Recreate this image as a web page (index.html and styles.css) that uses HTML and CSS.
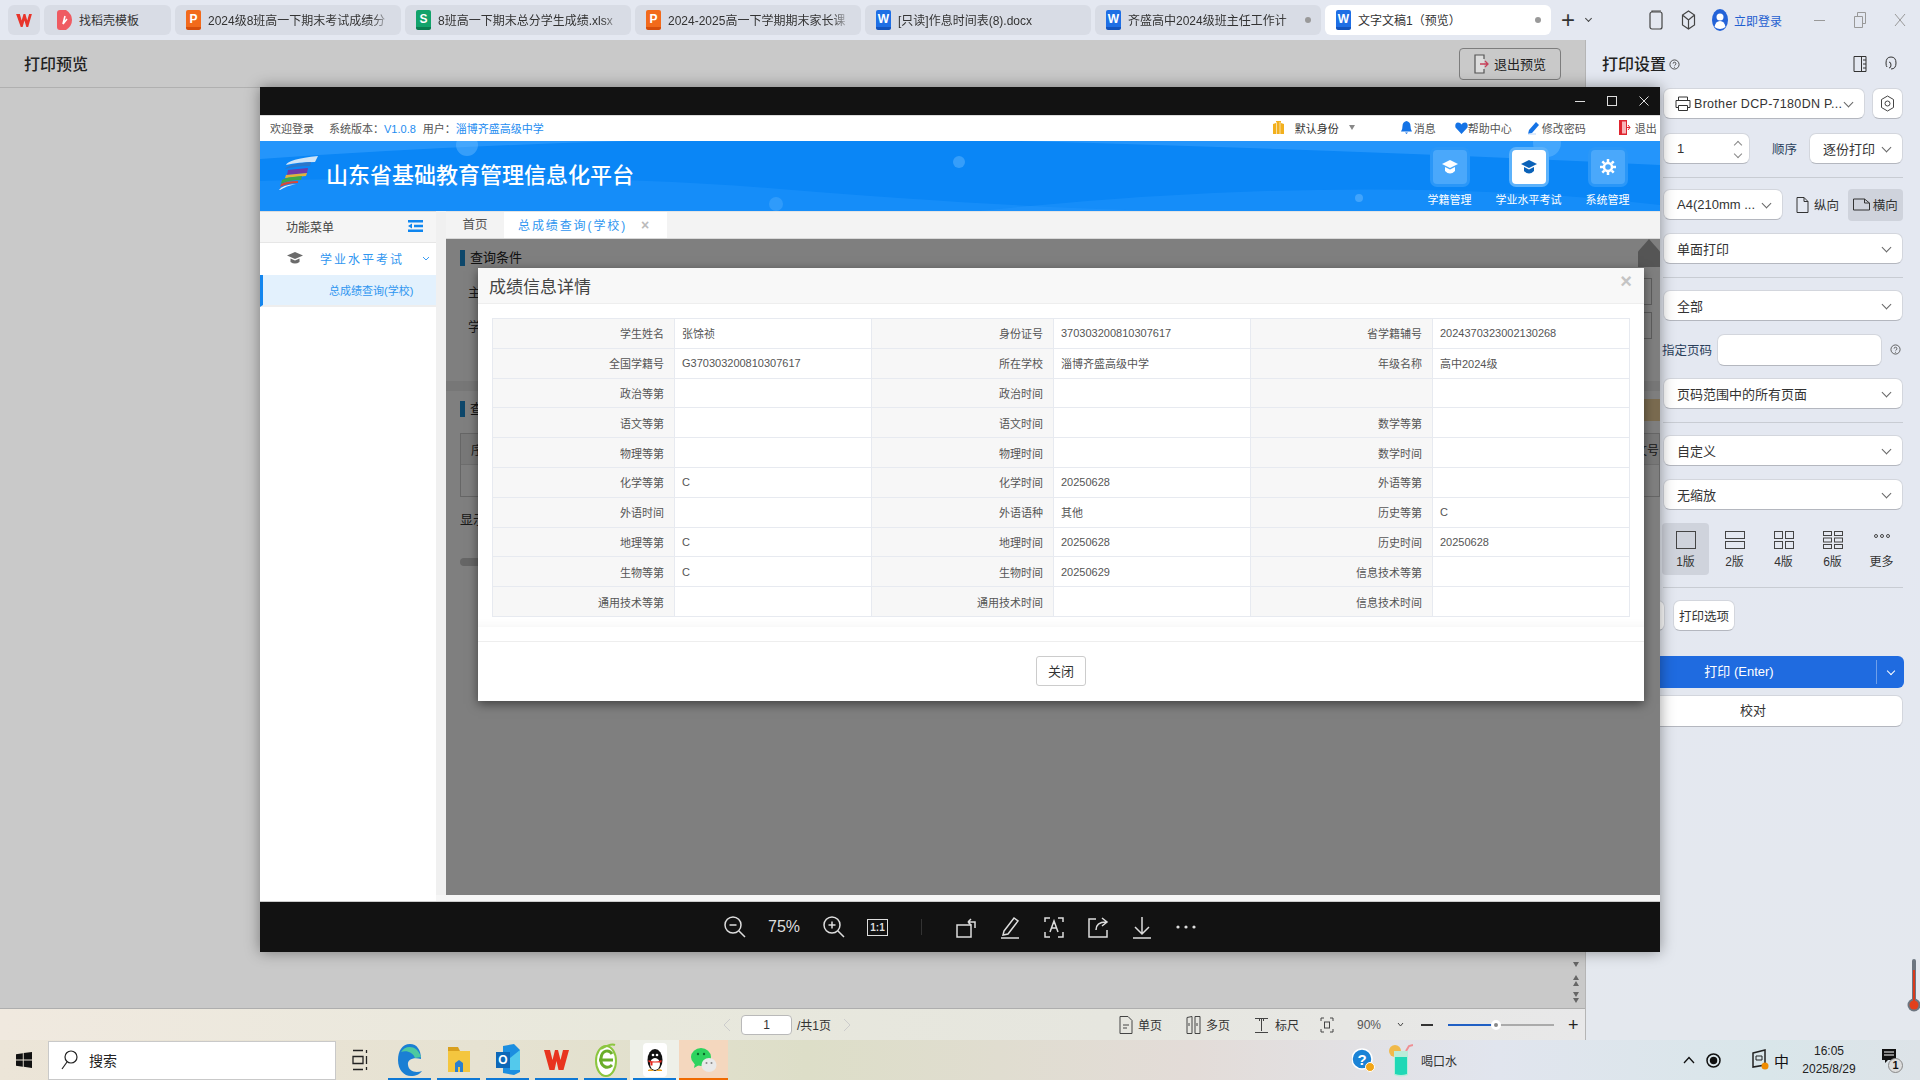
FILE: index.html
```html
<!DOCTYPE html>
<html lang="zh-CN">
  <head>
    <meta charset="UTF-8" />
    <title>打印预览</title>
    <link rel="stylesheet" href="styles.css">
  </head>
  <body>
    <div class="tabbar">
      <div class="tab logo-tab">
        <svg width="16" height="13" viewBox="0 0 17 14"><path d="M0 0h4l2 7 2-7h2l2 7 2-7h3l-4 14h-2L9 7l-2 7H5z" fill="#e8352b"/></svg>
      </div>
      <div class="tab tab-first">
        <svg class="fi" width="15" height="20" viewBox="0 0 15 20"><path d="M0 3q0-3 3-3h6q6 4 6 10t-6 10H3q-3 0-3-3z" fill="#ef5b62"/><path d="M8 6l-2 8 4-5" stroke="#fff" stroke-width="1.6" fill="none"/></svg>
        <span>找稻壳模板</span>
      </div>
      <div class="tab"><i class="fi doc doc-p">P</i><span>2024级8班高一下期末考试成绩分</span></div>
      <div class="tab"><i class="fi doc doc-s">S</i><span>8班高一下期末总分学生成绩.xlsx</span></div>
      <div class="tab"><i class="fi doc doc-p">P</i><span>2024-2025高一下学期期末家长课</span></div>
      <div class="tab"><i class="fi doc doc-w">W</i><span>[只读]作息时间表(8).docx</span></div>
      <div class="tab tab-dot"><i class="fi doc doc-w">W</i><span>齐盛高中2024级班主任工作计</span><b class="dot"></b></div>
      <div class="tab tab-dot active"><i class="fi doc doc-w">W</i><span>文字文稿1（预览）</span><b class="dot"></b></div>
      <div class="plus">+</div>
      <div class="plus-caret"></div>
      <div class="tab-right">
        <svg width="14" height="20" viewBox="0 0 14 20" fill="none" stroke="#444" stroke-width="1.2"><rect x="1" y="2" width="12" height="17" rx="2"/><path d="M3 2V1h9"/></svg>
        <svg class="cube" width="15" height="20" viewBox="0 0 15 20" fill="none" stroke="#444" stroke-width="1.2"><path d="M7.500 1l6 4v10l-6 4-6-4V5zM1.500 5l6 5 6-5M7.500 10v9"/></svg>
        <svg class="avatar" width="16" height="24" viewBox="0 0 16 24"><ellipse cx="8" cy="12" rx="8" ry="11" fill="#2463d8"/><circle cx="8" cy="9" r="3.500" fill="#fff"/><path d="M2.500 19q1-6 5.500-6t5.500 6q-5.500 4-11 0" fill="#fff"/></svg>
        <span class="login">立即登录</span>
        <div class="winbtn"><svg width="14" height="14" viewBox="0 0 14 14" stroke="#999" fill="none"><path d="M1 7.500h11"/></svg></div>
        <div class="winbtn"><svg width="14" height="18" viewBox="0 0 14 18" stroke="#999" fill="none"><path d="M1.500 5.500h8v11h-8zM4.500 5.500v-4h8v11h-3"/></svg></div>
        <div class="winbtn"><svg width="14" height="16" viewBox="0 0 14 16" stroke="#999" fill="none"><path d="M2 2l10 12M12 2L2 14"/></svg></div>
      </div>
    </div>

    <div class="main">
      <div class="preview">
        <div class="preview-head">
          <h1>打印预览</h1>
          <button class="exit-btn">
            <svg width="15" height="20" viewBox="0 0 15 20" fill="none"><path d="M10 5V1H1v18h9v-4" stroke="#555" stroke-width="1.200" fill="#ddd"/><path d="M6 10h8M11 7l3 3-3 3" stroke="#c8405a" stroke-width="1.300"/></svg>
            退出预览
          </button>
        </div>
        <div class="canvas">
          <div class="scroll-btns">
            <svg width="8" height="8" viewBox="0 0 8 8"><path d="M1 2h6L4 7z" fill="#666"/></svg>
            <svg class="mt" width="8" height="12" viewBox="0 0 8 12"><path d="M4 0l3 5H1zM4 6l3 5H1z" fill="#666"/></svg>
            <svg class="mt2" width="8" height="12" viewBox="0 0 8 12"><path d="M1 1h6L4 6zM1 7h6l-3 5z" fill="#666"/></svg>
          </div>
        </div>
        <div class="statusbar">
          <svg class="chev-l" width="8" height="14" viewBox="0 0 8 14" fill="none" stroke="#ccc"><path d="M7 1L1 7l6 6"/></svg>
          <div class="page-input">1</div>
          <span class="page-total">/共1页</span>
          <svg class="chev-r" width="8" height="14" viewBox="0 0 8 14" fill="none" stroke="#ccc"><path d="M1 1l6 6-6 6"/></svg>
          <svg class="st-i1" width="14" height="20" viewBox="0 0 14 20" fill="none" stroke="#444"><path d="M1 1.500h8l4 4v13H1zM4 10h6M4 13h4"/></svg>
          <span class="st-t">单页</span>
          <svg class="st-i2" width="15" height="20" viewBox="0 0 15 20" fill="none" stroke="#444"><path d="M1 2.500l5-1v17H1zM9 1.500h5v17H9zM3 8v3M11 8v3"/></svg>
          <span class="st-t">多页</span>
          <svg class="st-i3" width="15" height="20" viewBox="0 0 15 20" fill="none" stroke="#444"><path d="M1 3.500h13M7.500 4v12M5.500 4v2M9.500 4v2M1 17.500h13"/></svg>
          <span class="st-t st-t3">标尺</span>
          <svg class="st-i4" width="14" height="18" viewBox="0 0 14 18" fill="none" stroke="#444"><path d="M1 5V2h3M10 2h3v3M13 13v3h-3M4 16H1v-3"/><rect x="4.500" y="6" width="5" height="6"/></svg>
          <span class="zoom-pct">90%</span>
          <svg class="st-c" width="7" height="5" viewBox="0 0 7 5" fill="none" stroke="#444"><path d="M1 1l2.500 3L6 1"/></svg>
          <div class="st-minus"></div>
          <div class="slider"><div class="slider-fill"></div><div class="slider-knob"></div></div>
          <div class="st-plus">+</div>
        </div>
      </div>

      <div class="panel">
        <div class="panel-head">
          <h2>打印设置</h2>
          <svg class="help" width="11" height="11" viewBox="0 0 12 12" fill="none" stroke="#444"><circle cx="6" cy="6" r="5"/><path d="M4.500 5q0-1.500 1.500-1.500T7.500 5 6 7M6 8.500v1"/></svg>
          <svg class="ph-i1" width="14" height="18" viewBox="0 0 14 18" fill="none" stroke="#333"><path d="M1 1.500h12v15H1zM8.500 2v15M10 5h3M10 9h3M10 13h3"/></svg>
          <svg class="ph-i2" width="13" height="18" viewBox="0 0 13 18" fill="none" stroke="#333"><path d="M2 12q-1-1-1-4 0-6 5-6M6 2q5 0 5 6t-5 6M4 7q2 0 2 3t-2 3"/></svg>
        </div>
        <div class="row first">
          <div class="sel grow">
            <svg class="printer" width="16" height="15" viewBox="0 0 16 15" fill="none" stroke="#333"><path d="M3.500 4V1h9v3M1 4.500h14v7h-2.500M1 4.500v7h2.500M3.500 9.500h9v5h-9z"/></svg>
            <span class="printer-name">Brother DCP-7180DN P...</span>
          </div>
          <div class="icon-box">
            <svg width="15" height="17" viewBox="0 0 15 17" fill="none" stroke="#444"><path d="M7.500 1l6 3.500v8l-6 3.500-6-3.500v-8z"/><circle cx="7.500" cy="8.500" r="2.500"/></svg>
          </div>
        </div>
        <div class="row">
          <div class="copies">1<div class="spin"><i class="up"></i><i class="down"></i></div></div>
          <span class="lbl order">顺序</span>
          <div class="sel order-sel">逐份打印</div>
        </div>
        <hr class="hr-first" />
        <div class="row">
          <div class="sel paper">A4(210mm ...</div>
          <div class="orient">
            <svg width="13" height="16" viewBox="0 0 13 16" fill="none" stroke="#333"><path d="M1 .500h7l4 4v11H1zM8 .500v4h4"/></svg>纵向
          </div>
          <div class="orient on">
            <svg width="17" height="13" viewBox="0 0 17 13" fill="none" stroke="#333"><path d="M.500 1h11l5 4v7H.500zM11.500 1v4h5"/></svg>横向
          </div>
        </div>
        <div class="sel">单面打印</div>
        <hr />
        <div class="sel">全部</div>
        <div class="row page-row">
          <span class="lbl">指定页码</span>
          <div class="inp"></div>
          <svg width="11" height="11" viewBox="0 0 12 12" fill="none" stroke="#555"><circle cx="6" cy="6" r="5"/><path d="M4.500 5q0-1.500 1.500-1.500T7.500 5 6 7M6 8.500v1"/></svg>
        </div>
        <div class="sel">页码范围中的所有页面</div>
        <hr />
        <div class="sel">自定义</div>
        <div class="sel">无缩放</div>
        <div class="layouts">
          <div class="lay on"><svg width="20" height="18" viewBox="0 0 20 18" fill="none" stroke="#444"><rect x=".500" y=".500" width="19" height="17"/></svg>1版</div>
          <div class="lay"><svg width="20" height="18" viewBox="0 0 20 18" fill="none" stroke="#444"><rect x=".500" y=".500" width="19" height="7"/><rect x=".500" y="10.500" width="19" height="7"/></svg>2版</div>
          <div class="lay"><svg width="20" height="18" viewBox="0 0 20 18" fill="none" stroke="#444"><rect x=".500" y=".500" width="8" height="7"/><rect x="11.500" y=".500" width="8" height="7"/><rect x=".500" y="10.500" width="8" height="7"/><rect x="11.500" y="10.500" width="8" height="7"/></svg>4版</div>
          <div class="lay"><svg width="20" height="18" viewBox="0 0 20 18" fill="none" stroke="#444"><rect x=".500" y=".500" width="8" height="4"/><rect x="11.500" y=".500" width="8" height="4"/><rect x=".500" y="7" width="8" height="4"/><rect x="11.500" y="7" width="8" height="4"/><rect x=".500" y="13.500" width="8" height="4"/><rect x="11.500" y="13.500" width="8" height="4"/></svg>6版</div>
          <div class="lay"><svg width="20" height="18" viewBox="0 0 20 18" fill="none" stroke="#444"><circle cx="4" cy="5" r="1.500"/><circle cx="10" cy="5" r="1.500"/><circle cx="16" cy="5" r="1.500"/></svg>更多</div>
        </div>
        <hr />
        <div class="row opts">
          <div class="opt-hidden"></div>
          <button class="opt-btn">打印选项</button>
        </div>
        <div class="print-btn"><span>打印 (Enter)</span><i></i></div>
        <div class="check-btn">校对</div>
      </div>
    </div>

    <div class="taskbar">
      <svg class="start" width="16" height="16" viewBox="0 0 16 16" fill="#111"><path d="M0 2.300l6.800-1v6.300H0zM7.700 1.100L16 0v7.600H7.700zM0 8.500h6.800v6.300L0 13.700zM7.700 8.500H16V16l-8.300-1.200z"/></svg>
      <div class="search">
        <svg width="18" height="22" viewBox="0 0 18 22" fill="none" stroke="#222" stroke-width="1.200"><circle cx="11" cy="8" r="6"/><path d="M7 13l-5 7"/></svg>
        <span>搜索</span>
      </div>
      <svg class="taskview" width="16" height="22" viewBox="0 0 16 22" fill="none" stroke="#222" stroke-width="1.300"><path d="M1 1.500h10M1 7.500h10v7H1zM1 20.500h10M14.500 1v3M14.500 7v8M14.500 18v3"/></svg>
      <div class="app run"><svg width="26" height="34" viewBox="0 0 26 34"><path d="M13 1C5 1 1 8 1 17c0 10 6 16 13 16 5 0 9-2 11-5-6 2-13 1-14-6-1-6 6-8 13-6C24 7 20 1 13 1" fill="#1a7fd4"/><path d="M4 9C8 2 20 1 24 14l-6 1C16 9 9 7 4 9" fill="#4dc9a0"/></svg></div>
      <div class="app run"><svg width="24" height="28" viewBox="0 0 24 28"><path d="M1 1h10l2 4H1z" fill="#d9a01e"/><path d="M1 5h22v21H1z" fill="#f4c63f"/><path d="M8 26v-9l4-3 4 3v9h-3v-5h-2v5z" fill="#2b7fd0"/></svg></div>
      <div class="app run"><svg width="26" height="34" viewBox="0 0 26 34"><path d="M8 3l11-2 6 6v22l-6 3-11-2z" fill="#1c8ee0"/><path d="M15 15l10-8v20H15z" fill="#53c9ec"/><rect x="1" y="9" width="14" height="16" fill="#0d68b8"/><text x="8" y="21" class="oltext">O</text></svg></div>
      <div class="app run"><svg width="25" height="20" viewBox="0 0 25 20"><path d="M0 0h6l2.500 10L11 0h3l2.500 10L19 0h6l-5.500 20h-5L12.500 11l-2 9h-5z" fill="#e8341f"/></svg></div>
      <div class="app run"><svg width="22" height="34" viewBox="0 0 22 34"><ellipse cx="11" cy="18" rx="10" ry="15" fill="#fff" stroke="#8cc63f" stroke-width="2"/><path d="M4 17h14M17 11c-3-5-10-4-11 4-1 8 6 12 11 7" fill="none" stroke="#6aae2a" stroke-width="3"/><path d="M6 6q10-6 14-4" stroke="#8cc63f" stroke-width="2" fill="none"/></svg></div>
      <div class="app qq run"><div class="qq-tile"><svg width="18" height="28" viewBox="0 0 18 28"><ellipse cx="9" cy="14" rx="7.500" ry="11" fill="#111"/><ellipse cx="9" cy="18" rx="5" ry="6" fill="#fff"/><circle cx="7" cy="9" r="1.300" fill="#fff"/><circle cx="11" cy="9" r="1.300" fill="#fff"/><path d="M2.500 14q6.500 3 13 0v2.500h-9v3h-2v-3l-2-.5z" fill="#e8281f"/><path d="M2 24q3-2 6 1H2zM16 24q-3-2-6 1h6z" fill="#f0a51e"/></svg></div></div>
      <div class="app wx run-o"><svg width="26" height="26" viewBox="0 0 26 26"><ellipse cx="10" cy="10" rx="10" ry="9" fill="#2fd35f"/><path d="M4 16l-1 5 5-3z" fill="#2fd35f"/><circle cx="7" cy="7" r="1.200" fill="#0b6a2a"/><circle cx="13" cy="7" r="1.200" fill="#0b6a2a"/><ellipse cx="18" cy="18" rx="7.500" ry="7" fill="#e9e9e9"/><circle cx="15.500" cy="16" r="1" fill="#888"/><circle cx="20.500" cy="16" r="1" fill="#888"/></svg></div>
      <svg class="tb-help" width="24" height="24" viewBox="0 0 24 24"><circle cx="10" cy="11" r="10" fill="#1b83d6" stroke="#fff" stroke-width="1.500"/><text x="10" y="17" class="qtext">?</text><circle cx="18" cy="19" r="4.500" fill="#f2a516" stroke="#fff"/></svg>
      <svg class="tb-cup" width="24" height="34" viewBox="0 0 24 34"><circle cx="6" cy="8" r="6" fill="#f0b94a"/><path d="M17 8l3-5 4-1" stroke="#ef8f94" stroke-width="2" fill="none"/><path d="M5 8h14v24q-7 3-14 0z" fill="#b9ecd9"/><path d="M6 14h12v17q-6 2-12 0z" fill="#1fd8b6"/></svg>
      <span class="tb-cup-txt">喝口水</span>
      <svg class="tray-up" width="12" height="8" viewBox="0 0 12 8" fill="none" stroke="#111" stroke-width="1.300"><path d="M1 7l5-5.500L11 7"/></svg>
      <svg class="tray-rec" width="15" height="15" viewBox="0 0 15 15" fill="none" stroke="#111" stroke-width="1.500"><circle cx="7.500" cy="7.500" r="6.500"/><circle cx="7.500" cy="7.500" r="3" fill="#111"/></svg>
      <svg class="tray-ime" width="17" height="22" viewBox="0 0 17 22"><path d="M1 4l12-3v15l-12 2z" fill="none" stroke="#222" stroke-width="1.500"/><path d="M4 7h6v4H4z" fill="none" stroke="#222"/><circle cx="13" cy="17" r="3.500" fill="#f08c00"/></svg>
      <span class="tray-zh">中</span>
      <div class="clock"><span>16:05</span><span>2025/8/29</span></div>
      <div class="notify">
        <svg width="16" height="16" viewBox="0 0 16 16"><path d="M1 1h14v11H7l-3 3v-3H1z" fill="#111"/><path d="M3 4h10M3 7h10" stroke="#fff"/></svg>
        <b>1</b>
      </div>
    </div>

    <svg class="thermo" width="14" height="56" viewBox="0 0 14 56"><rect x="5" y="1" width="4" height="44" rx="2" fill="#6d7680"/><circle cx="7" cy="47" r="6.500" fill="#6d7680"/><rect x="6" y="12" width="2" height="34" fill="#d93a1c"/><circle cx="7" cy="47" r="4.500" fill="#e2401b"/></svg>

    <div class="win">
      <div class="win-title">
        <svg width="12" height="12" viewBox="0 0 12 12" stroke="#ddd"><path d="M1 6.500h10"/></svg>
        <svg width="12" height="12" viewBox="0 0 12 12" stroke="#ddd" fill="none"><rect x="1.500" y="1.500" width="9" height="9"/></svg>
        <svg width="12" height="12" viewBox="0 0 12 12" stroke="#ddd" fill="none"><path d="M1.500 1.500l9 9M10.500 1.500l-9 9"/></svg>
      </div>
      <div class="info">
        <span class="welcome">欢迎登录</span>
        <span class="ver">系统版本：<em>V1.0.8</em></span>
        <span class="usr">用户：<em>淄博齐盛高级中学</em></span>
        <svg class="i-role" width="11" height="14" viewBox="0 0 11 14"><path d="M0 13h11V3L8 2v-2H3v2L0 3z" fill="#f2b01e"/><path d="M3.500 1v12M7 1v12" stroke="#fff" stroke-width=".6"/></svg>
        <span class="role">默认身份</span>
        <i class="role-caret"></i>
        <svg class="i-bell" width="11" height="13" viewBox="0 0 11 13"><path d="M5.500 0q4 1 4 5t1.500 5.500H0q1.500-1.500 1.500-5.500t4-5M4 11.500h3L5.500 13z" fill="#1473e6"/></svg>
        <span>消息</span>
        <svg class="i-heart" width="13" height="12" viewBox="0 0 13 12"><path d="M6.500 12L.5 5.500Q-.5 1 3 .5q2.500 0 3.500 2 1-2 3.500-2 3.500.5 2.500 5z" fill="#1473e6"/></svg>
        <span>帮助中心</span>
        <svg class="i-pen" width="13" height="14" viewBox="0 0 13 14"><path d="M9 1l3 3-7 8-4 1 1-4z" fill="#1473e6"/><path d="M1 13h8" stroke="#bcd7f8"/></svg>
        <span>修改密码</span>
        <svg class="i-door" width="12" height="15" viewBox="0 0 12 15"><path d="M0 0h8v15H0z" fill="#e0252f"/><path d="M6 7.500h5M9 5l2 2.500L9 10" stroke="#e0252f" fill="none"/><path d="M3 1.500h4v12H3z" fill="#f7b4b8"/></svg>
        <span>退出</span>
      </div>
      <div class="banner">
        <svg class="wave" width="1400" height="70" viewBox="0 0 1400 70" preserveAspectRatio="none">
          <path d="M0 18Q400-10 760 0T1400 24V0H0z" fill="#3aa3ff" opacity=".55"/>
          <path d="M0 40Q300 30 520 48T900 70H0z" fill="#2b9bff" opacity=".35"/>
          <path d="M720 70Q1100 30 1400 64V70z" fill="#2b9bff" opacity=".35"/>
          <circle cx="207" cy="4" r="11" fill="#6dbcff" opacity=".45"/>
          <circle cx="516" cy="63" r="7" fill="#6dbcff" opacity=".3"/>
          <circle cx="699" cy="21" r="6" fill="#6dbcff" opacity=".45"/>
          <circle cx="1099" cy="57" r="4" fill="#6dbcff" opacity=".5"/>
          <circle cx="1287" cy="2" r="14" fill="#6dbcff" opacity=".45"/>
        </svg>
        <svg class="logo" width="40" height="34" viewBox="0 0 40 34">
          <path d="M8 9Q10 3 40 0L37 6Q20 6 8 9" fill="#cfe4f7"/>
          <path d="M7 13Q10 8 33 6L32 10Q18 10 7 13" fill="#2b76c9"/>
          <path d="M10 14L30 12 29 17 9 19z" fill="#6e3aa8"/>
          <path d="M8 19L29 17 28 20 7 22z" fill="#e2b23a"/>
          <path d="M4 24Q8 21 24 20L23 24Q10 24 3 28z" fill="#3fa648"/>
          <path d="M3 28Q8 25 20 25L20 27Q10 27 2 31z" fill="#d5483a"/>
          <path d="M1 34Q4 29 18 28 8 30 2 34z" fill="#e6eef5"/>
        </svg>
        <div class="brand">山东省基础教育管理信息化平台</div>
        <div class="modules">
          <div class="mod">
            <div class="mod-ico">
              <svg width="16" height="14" viewBox="0 0 16 14"><path d="M8 0l8 4-8 4-8-4zM3 7l5 2.500L13 7v4q-5 5-10 0z" fill="#fff"/></svg>
            </div>
            <span>学籍管理</span>
          </div>
          <div class="mod mod-on">
            <div class="mod-ico">
              <svg width="16" height="14" viewBox="0 0 16 14"><path d="M8 0l8 4-8 4-8-4zM3 7l5 2.500L13 7v4q-5 5-10 0z" fill="#0b62b8"/></svg>
            </div>
            <span>学业水平考试</span>
          </div>
          <div class="mod">
            <div class="mod-ico">
              <svg width="18" height="18" viewBox="0 0 18 18" fill="none" stroke="#fff"><circle cx="9" cy="9" r="4" stroke-width="2.500"/><path d="M9 1v3M9 14v3M1 9h3M14 9h3M3.300 3.300l2 2M12.700 12.700l2 2M14.700 3.300l-2 2M5.300 12.700l-2 2" stroke-width="2.500"/></svg>
            </div>
            <span>系统管理</span>
          </div>
        </div>
      </div>
      <div class="win-body">
        <aside class="sidebar">
          <div class="side-head">
            <span>功能菜单</span>
            <svg width="15" height="12" viewBox="0 0 15 12" fill="#0f86ef"><path d="M0 0h15v2.500H0zM6 4.700h9v2.500H6zM0 9.500h15V12H0zM4 3.500L0 6l4 2.500z"/></svg>
          </div>
          <div class="side-item">
            <svg width="16" height="12" viewBox="0 0 16 12" fill="#6b6b6b"><path d="M8 0l8 3.500L8 7 0 3.500zM3.500 6.500L8 8.500l4.500-2V10q-4.500 3-9 0z"/></svg>
            <span>学业水平考试</span>
            <svg class="side-caret" width="8" height="5" viewBox="0 0 8 5" fill="none" stroke="#3b9df5"><path d="M1 1l3 3 3-3"/></svg>
          </div>
          <div class="side-sub">总成绩查询(学校)</div>
        </aside>
        <div class="content">
          <div class="tabs">
            <div class="ctab">首页</div>
            <div class="ctab ctab-on">总成绩查询(学校)<b>×</b></div>
          </div>
          <div class="pane">
            <div class="sec-title">查询条件</div>
            <div class="q-row"><span>主</span><i class="q-box"></i></div>
            <div class="q-row q-row2"><span>学</span><i class="q-box"></i></div>
            <div class="band"></div>
            <div class="sec-title sec2">查询结果</div>
            <div class="res-action"><button>导出</button></div>
            <div class="res-table">
              <div class="res-head"><span>序号</span><span>文号</span></div>
              <div class="res-row"></div>
            </div>
            <div class="res-foot">显示</div>
            <div class="res-scroll"></div>
            <div class="totop"></div>
            <div class="backdrop"></div>
          </div>
          <div class="strip"></div>
        </div>
      </div>
      <div class="viewer">
        <svg width="24" height="24" viewBox="0 0 24 24" fill="none" stroke="#ddd" stroke-width="1.500"><circle cx="10" cy="10" r="8"/><path d="M6.500 10h7M16 16l6 6"/></svg>
        <span class="scale">75%</span>
        <svg width="24" height="24" viewBox="0 0 24 24" fill="none" stroke="#ddd" stroke-width="1.500"><circle cx="10" cy="10" r="8"/><path d="M6.500 10h7M10 6.500v7M16 16l6 6"/></svg>
        <div class="one"><span>1:1</span></div>
        <i class="v-div"></i>
        <svg width="24" height="24" viewBox="0 0 24 24" fill="none" stroke="#ddd" stroke-width="1.500"><rect x="3" y="10" width="14" height="12"/><path d="M14 7h7v6M14 7l3-3M14 7l3 3"/></svg>
        <svg width="24" height="24" viewBox="0 0 24 24" fill="none" stroke="#ddd" stroke-width="1.500"><path d="M6 16L16 3l4 3-10 13-5 1zM3 23h18"/></svg>
        <svg width="24" height="24" viewBox="0 0 24 24" fill="none" stroke="#ddd" stroke-width="1.500"><path d="M3 7V3h5M16 3h5v4M21 17v5h-5M8 22H3v-5M8 17l4-11 4 11M9.500 13h5"/></svg>
        <svg width="24" height="24" viewBox="0 0 24 24" fill="none" stroke="#ddd" stroke-width="1.500"><path d="M10 4H3v18h18v-7M10 15q0-8 10-8M16 3l5 4-5 4"/></svg>
        <svg width="24" height="24" viewBox="0 0 24 24" fill="none" stroke="#ddd" stroke-width="1.500"><path d="M12 2v16M5 12l7 7 7-7M3 23h18"/></svg>
        <svg width="24" height="24" viewBox="0 0 24 24" fill="#ddd"><circle cx="4" cy="12" r="1.600"/><circle cx="12" cy="12" r="1.600"/><circle cx="20" cy="12" r="1.600"/></svg>
      </div>

      <div class="dialog">
        <div class="dlg-head"><h3>成绩信息详情</h3><b class="dlg-x">×</b></div>
        <div class="dlg-body">
          <table class="score">
            <colgroup><col class="c-l"><col class="c-v"><col class="c-l"><col class="c-v"><col class="c-l"><col class="c-v"></colgroup>
            <tr><th>学生姓名</th><td>张馀祯</td><th>身份证号</th><td>370303200810307617</td><th>省学籍辅号</th><td>2024370323002130268</td></tr>
            <tr><th>全国学籍号</th><td>G370303200810307617</td><th>所在学校</th><td>淄博齐盛高级中学</td><th>年级名称</th><td>高中2024级</td></tr>
            <tr><th>政治等第</th><td></td><th>政治时间</th><td></td><th></th><td></td></tr>
            <tr><th>语文等第</th><td></td><th>语文时间</th><td></td><th>数学等第</th><td></td></tr>
            <tr><th>物理等第</th><td></td><th>物理时间</th><td></td><th>数学时间</th><td></td></tr>
            <tr><th>化学等第</th><td>C</td><th>化学时间</th><td>20250628</td><th>外语等第</th><td></td></tr>
            <tr><th>外语时间</th><td></td><th>外语语种</th><td>其他</td><th>历史等第</th><td>C</td></tr>
            <tr><th>地理等第</th><td>C</td><th>地理时间</th><td>20250628</td><th>历史时间</th><td>20250628</td></tr>
            <tr><th>生物等第</th><td>C</td><th>生物时间</th><td>20250629</td><th>信息技术等第</th><td></td></tr>
            <tr><th>通用技术等第</th><td></td><th>通用技术时间</th><td></td><th>信息技术时间</th><td></td></tr>
          </table>
        </div>
        <div class="dlg-foot"><button class="close-btn">关闭</button></div>
      </div>
    </div>
  </body>
</html>
```

FILE: styles.css
```css
* {
  box-sizing: border-box;
}
html, body {
  margin: 0;
  height: 100%;
}
body {
  width: 1920px;
  height: 1080px;
  overflow: hidden;
  position: relative;
  display: flex;
  flex-direction: column;
  background-color: #e4e8f1;
  color: #333;
  font-family: "Liberation Sans", "Noto Sans CJK SC", sans-serif;
  font-size: 12px;
}
button {
  font-family: inherit;
  cursor: pointer;
}
i, em {
  font-style: normal;
}

/* top tabs */
.tabbar {
  height: 40px;
  flex: none;
  display: flex;
  align-items: center;
  gap: 4px;
  padding-left: 8px;
  background-color: #e4e8f1;
}
.tab {
  width: 226px;
  height: 30px;
  flex: none;
  display: flex;
  align-items: center;
  padding: 0 10px 0 11px;
  background-color: #d8dce5;
  border-radius: 6px;
  white-space: nowrap;
  font-size: 12px;
  color: #333;
}
.tab span {
  flex: 1;
  overflow: hidden;
  margin-left: 7px;
  padding-bottom: 2px;
  -webkit-mask-image: linear-gradient(to right, #000 90%, transparent);
  mask-image: linear-gradient(to right, #000 90%, transparent);
}
.logo-tab {
  width: 32px;
  padding: 0;
  justify-content: center;
}
.tab-first {
  width: 127px;
  padding-left: 13px;
}
.tab-first span {
  -webkit-mask-image: none;
  mask-image: none;
}
.tab.active {
  background-color: #fff;
}
.tab-dot .dot {
  width: 6px;
  height: 6px;
  border-radius: 50%;
  background-color: #999;
  margin-left: 6px;
}
.tab.active span {
  -webkit-mask-image: none;
  mask-image: none;
}
.fi {
  flex: none;
}
.doc {
  width: 15px;
  height: 20px;
  border-radius: 2px;
  color: #fff;
  font-size: 12px;
  font-weight: bold;
  text-align: center;
  line-height: 18px;
}
.doc-p {
  background-color: #f26a1b;
  border-bottom: 3px solid #d64e0c;
}
.doc-s {
  background-color: #12a36b;
  border-bottom: 3px solid #0a7d50;
}
.doc-w {
  background-color: #1f6fe5;
  border-bottom: 3px solid #1354bd;
}
.plus {
  margin-left: 6px;
  font-size: 24px;
  font-weight: 300;
  line-height: 24px;
  color: #333;
}
.plus-caret {
  width: 5px;
  height: 5px;
  margin: -3px 0 0 7px;
  border-right: 1px solid #444;
  border-bottom: 1px solid #444;
  transform: rotate(45deg);
}
.tab-right {
  display: flex;
  align-items: center;
  margin-left: 54px;
}
.cube {
  margin-left: 18px;
}
.avatar {
  margin-left: 16px;
}
.login {
  margin-left: 6px;
  color: #1f5fd0;
  font-size: 12px;
  white-space: nowrap;
}
.winbtn {
  width: 40px;
  display: flex;
  justify-content: center;
}
.winbtn:first-of-type {
  margin-left: 18px;
}

/* main area */
.main {
  height: 1000px;
  flex: none;
  display: flex;
}
.preview {
  width: 1586px;
  flex: none;
  display: flex;
  flex-direction: column;
  background-color: #c9c9c9;
  border-right: 1px solid #b5b5b5;
}
.preview-head {
  height: 48px;
  flex: none;
  display: flex;
  align-items: center;
  justify-content: space-between;
  padding: 0 24px;
  border-bottom: 1px solid #b0b0b0;
}
.preview-head h1 {
  margin: -2px 0 0;
  font-size: 16px;
  font-weight: 500;
  color: #222;
}
.exit-btn {
  width: 102px;
  height: 32px;
  display: flex;
  align-items: center;
  justify-content: center;
  gap: 5px;
  font-size: 13px;
  color: #222;
  background-color: transparent;
  border: 1px solid #7d7d7d;
  border-radius: 4px;
}
.canvas {
  flex: 1;
  display: flex;
  flex-direction: column;
  align-items: flex-end;
  justify-content: flex-end;
  padding: 0 5px 5px 0;
}
.scroll-btns {
  display: flex;
  flex-direction: column;
  align-items: center;
}
.scroll-btns .mt {
  margin-top: 7px;
}
.scroll-btns .mt2 {
  margin-top: 4px;
}

/* status bar */
.statusbar {
  height: 32px;
  flex: none;
  display: flex;
  align-items: center;
  padding-left: 723px;
  background: linear-gradient(to right, #f0e9df, #e8e8dc 40%, #e6e6df 70%, #e8e8e9);
  border-top: 1px solid #aeaeae;
  font-size: 12px;
  color: #333;
}
.page-input {
  width: 51px;
  height: 20px;
  margin-left: 10px;
  background-color: #fff;
  border: 1px solid #b9b9b9;
  border-radius: 4px;
  text-align: center;
  line-height: 19px;
  font-size: 12px;
}
.page-total {
  margin-left: 5px;
  width: 40px;
  white-space: nowrap;
}
.chev-r {
  margin-left: 6px;
}
.st-i1 {
  margin-left: 268px;
}
.st-t {
  margin-left: 5px;
  width: 24px;
  white-space: nowrap;
}
.st-i2 {
  margin-left: 24px;
}
.st-i3 {
  margin-left: 24px;
}
.st-t3 {
  margin-left: 6px;
}
.st-i4 {
  margin-left: 21px;
}
.zoom-pct {
  margin-left: 23px;
  color: #555;
}
.st-c {
  margin-left: 16px;
}
.st-minus {
  width: 12px;
  height: 2px;
  margin-left: 17px;
  background-color: #333;
}
.slider {
  position: relative;
  width: 106px;
  height: 2px;
  margin-left: 15px;
  background-color: #aaa;
}
.slider-fill {
  width: 48px;
  height: 2px;
  background-color: #1f5fc4;
}
.slider-knob {
  position: absolute;
  left: 43px;
  top: -4px;
  width: 10px;
  height: 10px;
  border-radius: 50%;
  background-color: #888;
  border: 3px solid #fff;
}
.st-plus {
  margin-left: 14px;
  font-size: 18px;
  line-height: 18px;
  color: #222;
}

/* print settings panel */
.panel {
  width: 334px;
  flex: none;
  display: flex;
  flex-direction: column;
  gap: 13px;
  padding: 0 17px 0 77px;
  background: linear-gradient(to bottom, #e4e8f1 50%, #e4e8ee);
}
.panel-head {
  height: 48px;
  margin: 0 0 -13px -61px;
  display: flex;
  align-items: center;
  flex: none;
}
.panel-head h2 {
  margin: -2px 0 0;
  font-size: 16px;
  font-weight: 500;
  color: #222;
}
.panel-head .help {
  margin-left: 3px;
}
.ph-i1 {
  margin-left: 173px;
}
.ph-i2 {
  margin-left: 18px;
}
.row {
  display: flex;
  align-items: center;
  height: 31px;
  flex: none;
}
.row.first {
  gap: 7px;
  margin-bottom: 1px;
}
.sel, .icon-box, .copies, .inp, .opt-btn, .check-btn, .opt-hidden {
  background-color: #fff;
  border: 1px solid #d3d6dd;
  border-bottom-color: #b4b7bf;
  border-radius: 7px;
}
.sel {
  position: relative;
  height: 31px;
  flex: none;
  display: flex;
  align-items: center;
  padding-left: 13px;
  font-size: 13px;
  color: #333;
  white-space: nowrap;
}
.sel::after {
  content: "";
  position: absolute;
  right: 12px;
  top: 10px;
  width: 6px;
  height: 6px;
  border-right: 1px solid #666;
  border-bottom: 1px solid #666;
  transform: rotate(45deg);
}
.sel.grow {
  flex: 1;
  padding-left: 11px;
}
.printer {
  flex: none;
}
.printer-name {
  margin-left: 3px;
  font-size: 12.500px;
  letter-spacing: .3px;
}
.icon-box {
  width: 31px;
  height: 31px;
  display: flex;
  align-items: center;
  justify-content: center;
}
.copies {
  position: relative;
  width: 88px;
  height: 31px;
  padding-left: 13px;
  line-height: 29px;
  font-size: 13px;
}
.spin i {
  position: absolute;
  right: 8px;
  width: 6px;
  height: 6px;
  border-left: 1px solid #888;
  border-top: 1px solid #888;
}
.spin .up {
  top: 8px;
  transform: rotate(45deg);
}
.spin .down {
  top: 17px;
  transform: rotate(225deg);
}
.lbl {
  font-size: 12.500px;
  color: #2a3f5c;
  white-space: nowrap;
}
.order {
  margin-left: 22px;
}
.order-sel {
  width: 94px;
  margin-left: 12px;
}
.paper {
  width: 120px;
}
.orient {
  height: 32px;
  display: flex;
  align-items: center;
  gap: 5px;
  font-size: 12.500px;
  color: #333;
  white-space: nowrap;
}
.orient:nth-child(2) {
  margin-left: 13px;
  width: 52px;
}
.orient.on {
  width: 56px;
  justify-content: center;
  gap: 3px;
  background-color: #cfd3dc;
  border-radius: 4px;
}
.page-row {
  gap: 5px;
}
.page-row .lbl {
  margin-left: -1px;
}
.inp {
  width: 165px;
  height: 32px;
}
.page-row svg {
  margin-left: 3px;
}
hr {
  width: 100%;
  height: 1px;
  flex: none;
  margin: 0 0 -1px;
  border: none;
  background-color: #c8ccd3;
}
hr.hr-first {
  margin-bottom: -2px;
}
.layouts {
  height: 52px;
  flex: none;
  display: flex;
  margin: 0 0 -1px -2px;
}
.lay {
  width: 49px;
  height: 52px;
  display: flex;
  flex-direction: column;
  align-items: center;
  gap: 3px;
  padding-top: 8px;
  font-size: 12px;
  color: #333;
  flex: none;
}
.lay.on {
  width: 47px;
  margin: 0 1px 0 1px;
  background-color: #cfd3dc;
  border-radius: 4px;
}
.opts {
  gap: 8px;
  margin: 0 0 12px -20px;
}
.opt-hidden {
  width: 22px;
  height: 31px;
}
.opt-btn {
  width: 62px;
  height: 31px;
  padding: 0;
  font-size: 12.500px;
  color: #333;
}
.print-btn {
  height: 32px;
  flex: none;
  margin: 0 -1px -6px -61px;
  display: flex;
  align-items: center;
  background-color: #1f6be0;
  border-radius: 6px;
  color: #fff;
  font-size: 13px;
}
.print-btn span {
  width: 275px;
  height: 24px;
  line-height: 24px;
  text-align: center;
  border-right: 1px solid #6f9fe9;
}
.print-btn i {
  width: 6px;
  height: 6px;
  margin: -3px 0 0 11px;
  border-right: 1px solid #fff;
  border-bottom: 1px solid #fff;
  transform: rotate(45deg);
}
.check-btn {
  height: 32px;
  flex: none;
  margin-left: -60px;
  line-height: 30px;
  text-align: center;
  font-size: 13px;
}

/* windows taskbar */
.taskbar {
  height: 40px;
  flex: none;
  display: flex;
  align-items: center;
  padding-left: 16px;
  background: linear-gradient(to right, #ece5d8, #e6e2d2 25%, #dddec8 42%, #e3dcd8 62%, #e1e5ee 78%, #d9e6ea 92%, #dde3e8);
}
.start {
  flex: none;
}
.search {
  width: 288px;
  height: 39px;
  flex: none;
  margin-left: 16px;
  display: flex;
  align-items: center;
  gap: 11px;
  padding-left: 11px;
  background-color: #fff;
  border: 1px solid #c9c9c9;
  font-size: 14px;
  color: #222;
}
.taskview {
  flex: none;
  margin: 0 17px 0 16px;
}
.app {
  position: relative;
  width: 49px;
  height: 40px;
  flex: none;
  display: flex;
  align-items: center;
  justify-content: center;
}
.app.run::after, .app.run-o::after {
  content: "";
  position: absolute;
  left: 3px;
  right: 3px;
  bottom: 0;
  height: 2px;
  background-color: #0e78d5;
}
.app.qq {
  background-color: #eef0e8;
}
.app.wx {
  background-color: #f4d7be;
}
.app.run-o::after {
  left: 0;
  right: 0;
  background-color: #f06a00;
}
.qq-tile {
  width: 24px;
  height: 34px;
  display: flex;
  align-items: center;
  justify-content: center;
  background-color: #fff;
  border-radius: 4px;
}
.oltext {
  font: bold 12px "Liberation Sans", sans-serif;
  fill: #fff;
  text-anchor: middle;
}
.qtext {
  font: bold 15px "Liberation Sans", sans-serif;
  fill: #fff;
  text-anchor: middle;
}
.tb-help {
  margin-left: 624px;
  flex: none;
}
.tb-cup {
  margin-left: 13px;
  flex: none;
}
.tb-cup-txt {
  margin-left: 8px;
  width: 38px;
  font-size: 12px;
  white-space: nowrap;
  color: #333;
}
.tray-up {
  margin-left: 224px;
  flex: none;
}
.tray-rec {
  margin-left: 11px;
  flex: none;
}
.tray-ime {
  margin-left: 31px;
  flex: none;
}
.tray-zh {
  margin-left: 5px;
  font-size: 15px;
  color: #111;
}
.clock {
  width: 72px;
  margin-left: 4px;
  display: flex;
  flex-direction: column;
  align-items: center;
  gap: 3px;
  font-size: 12px;
  line-height: 15px;
  color: #222;
}
.notify {
  position: relative;
  margin-left: 16px;
  width: 24px;
  height: 24px;
}
.notify b {
  position: absolute;
  left: 7px;
  top: 10px;
  width: 15px;
  height: 15px;
  border-radius: 50%;
  background-color: #ddd;
  border: 1px solid #888;
  font-size: 11px;
  line-height: 13px;
  text-align: center;
  color: #111;
}
.thermo {
  position: absolute;
  left: 1907px;
  top: 958px;
}

/* floating window */
.win {
  position: absolute;
  left: 260px;
  top: 87px;
  width: 1400px;
  height: 865px;
  display: flex;
  flex-direction: column;
  background-color: #fff;
  box-shadow: 0 0 14px rgba(0, 0, 0, .4);
}
.win-title {
  height: 28px;
  flex: none;
  display: flex;
  align-items: center;
  justify-content: flex-end;
  gap: 20px;
  padding-right: 10px;
  background-color: #121212;
}
.info {
  height: 26px;
  flex: none;
  display: flex;
  align-items: center;
  padding: 0 0 2px 10px;
  font-size: 11px;
  color: #555;
  white-space: nowrap;
  background-color: #fff;
  border-top: 1px solid #ddd;
}
.info em {
  color: #1d8cf0;
}
.info span {
  flex: none;
}
.ver {
  margin-left: 15px;
}
.usr {
  margin-left: 7px;
}
.i-role {
  margin-left: 729px;
}
.role {
  margin-left: 11px;
  color: #333;
}
.role-caret {
  width: 0;
  height: 0;
  margin-left: 10px;
  border-left: 3px solid transparent;
  border-right: 3px solid transparent;
  border-top: 5px solid #888;
}
.i-bell {
  margin: 0 2px 0 46px;
}
.i-heart {
  margin: 0 0 0 19px;
}
.i-pen {
  margin: 0 2px 0 15px;
}
.i-door {
  margin: 0 4px 0 33px;
}
.banner {
  position: relative;
  height: 70px;
  flex: none;
  display: flex;
  align-items: center;
  padding: 0 0 7px 18px;
  background-color: #0a86f6;
  overflow: hidden;
}
.wave {
  position: absolute;
  left: 0;
  top: 0;
}
.logo {
  position: relative;
  flex: none;
}
.brand {
  position: relative;
  margin-left: 8px;
  font-size: 22px;
  font-weight: 500;
  color: #fff;
  white-space: nowrap;
}
.modules {
  position: relative;
  margin: 0 13px 0 auto;
  display: flex;
  align-self: flex-start;
}
.mod {
  width: 79px;
  height: 70px;
  padding-top: 6px;
  display: flex;
  flex-direction: column;
  align-items: center;
  gap: 7px;
  color: #fff;
  font-size: 11px;
  white-space: nowrap;
}
.mod-ico {
  width: 34px;
  height: 34px;
  margin-top: 3px;
  display: flex;
  align-items: center;
  justify-content: center;
  border-radius: 4px;
  background-color: #4aa8fb;
  box-shadow: 0 0 0 3px #2a97f8;
}
.mod-on .mod-ico {
  background-color: #fff;
  box-shadow: 0 0 0 3px #5cb2fb;
}
.win-body {
  height: 690px;
  flex: none;
  display: flex;
}
.sidebar {
  width: 176px;
  flex: none;
  background-color: #fff;
  border-top: 1px solid #dcdcdc;
}
.side-head {
  height: 31px;
  display: flex;
  align-items: center;
  justify-content: space-between;
  padding: 0 13px 2px 26px;
  background-color: #f5f5f5;
  border-bottom: 1px solid #e6e6e6;
  font-size: 12px;
  color: #444;
}
.side-item {
  height: 32px;
  display: flex;
  align-items: center;
  padding: 0 0 2px 27px;
  font-size: 12px;
  letter-spacing: 2px;
  color: #2f96f0;
  white-space: nowrap;
}
.side-item span {
  margin-left: 17px;
}
.side-caret {
  margin-left: 18px;
}
.side-sub {
  height: 32px;
  padding-left: 66px;
  line-height: 32px;
  font-size: 11px;
  color: #2f96f0;
  background-color: #e3f1fd;
  border-left: 3px solid #1486ee;
  border-bottom: 2px solid #eee;
}
.content {
  flex: 1;
  display: flex;
  flex-direction: column;
  padding-left: 10px;
  background-color: #f0f0f0;
}
.tabs {
  height: 28px;
  flex: none;
  display: flex;
  background-color: #f3f3f3;
  border-top: 1px solid #e4e4e4;
  border-bottom: 1px solid #d8d8d8;
}
.ctab {
  width: 58px;
  text-align: center;
  line-height: 26px;
  font-size: 12.500px;
  color: #555;
}
.ctab-on {
  width: 163px;
  padding-left: 14px;
  text-align: left;
  font-size: 12px;
  letter-spacing: 1.900px;
  color: #2f96f0;
  background-color: #fff;
}
.ctab-on b {
  margin-left: 14px;
  color: #bbb;
  font-size: 14px;
}
.pane {
  position: relative;
  flex: 1;
  padding: 11px 8px 0 14px;
  background-color: #fff;
  color: #333;
  overflow: hidden;
}
.strip {
  height: 6px;
  flex: none;
  margin-left: -10px;
  background-color: #f6f6f6;
}
.sec-title {
  height: 16px;
  padding-left: 5px;
  border-left: 5px solid #1b8fd6;
  font-size: 13px;
  line-height: 16px;
  color: #222;
}
.q-row {
  display: flex;
  align-items: center;
  justify-content: space-between;
  height: 27px;
  margin-top: 12px;
  padding-left: 8px;
  font-size: 13px;
}
.q-row2 {
  margin-top: 7px;
}
.q-box {
  width: 210px;
  height: 27px;
  border: 1px solid #bbb;
  margin-right: 0;
}
.band {
  height: 10px;
  margin: 42px -8px 0 -14px;
  background-color: #eee;
}
.sec2 {
  margin-top: 10px;
}
.res-action {
  display: flex;
  justify-content: flex-end;
  margin: -18px -8px 0 0;
  height: 22px;
}
.res-action button {
  width: 60px;
  height: 22px;
  border: none;
  background-color: #f5d6a0;
  color: #fff;
  font-size: 12px;
}
.res-table {
  margin-top: 12px;
  border: 1px solid #ccc;
  margin-right: -8px;
}
.res-head {
  height: 31px;
  display: flex;
  align-items: center;
  justify-content: space-between;
  padding: 0 0 0 10px;
  background-color: #f0f0f0;
  border-bottom: 1px solid #ddd;
  font-size: 12px;
}
.res-row {
  height: 31px;
}
.res-foot {
  margin-top: 12px;
  font-size: 13px;
}
.res-scroll {
  width: 120px;
  height: 8px;
  margin-top: 30px;
  background-color: #ccc;
  border-radius: 4px;
}
.totop {
  position: absolute;
  right: 0;
  top: 0;
  width: 22px;
  height: 28px;
  background-color: #aaa;
  clip-path: polygon(50% 0, 100% 45%, 100% 100%, 0 100%, 0 45%);
}
.backdrop {
  position: absolute;
  inset: 0;
  background-color: rgba(0, 0, 0, .5);
}
.viewer {
  height: 51px;
  flex: none;
  display: flex;
  align-items: center;
  justify-content: center;
  gap: 20px;
  background-color: #121212;
  border-top: 1px solid #ccc;
}
.scale {
  width: 35px;
  font-size: 16px;
  color: #ddd;
  text-align: center;
}
.one {
  width: 24px;
  height: 24px;
  display: flex;
  align-items: center;
  justify-content: center;
}
.one span {
  width: 21px;
  height: 17px;
  border: 1px solid #ddd;
  font-size: 10px;
  font-weight: bold;
  line-height: 15px;
  text-align: center;
  color: #ddd;
}
.v-div {
  width: 1px;
  height: 16px;
  margin: 0 12px 0 11px;
  background-color: #333;
}

/* detail dialog */
.dialog {
  position: absolute;
  left: 218px;
  top: 181px;
  width: 1166px;
  height: 433px;
  display: flex;
  flex-direction: column;
  background-color: #fff;
  box-shadow: 0 3px 10px rgba(0, 0, 0, .5);
}
.dlg-head {
  position: relative;
  height: 36px;
  flex: none;
  padding-left: 11px;
  background-color: #f8f8f8;
  border-bottom: 1px solid #eee;
}
.dlg-head h3 {
  margin: 0;
  font-size: 17px;
  font-weight: 400;
  line-height: 39px;
  color: #444;
}
.dlg-x {
  position: absolute;
  right: 12px;
  top: 2px;
  font-size: 20px;
  line-height: 22px;
  color: #c4c4c4;
}
.dlg-body {
  height: 323px;
  flex: none;
  padding: 14px 15px 0 14px;
  border-bottom: 0;
  box-shadow: inset 0 -14px 10px -12px #f6f6f6;
}
.score {
  width: 1137px;
  height: 298px;
  table-layout: fixed;
  border-collapse: collapse;
  font-size: 11px;
  color: #555;
}
.score .c-l {
  width: 182px;
}
.score .c-v {
  width: 197px;
}
.score th, .score td {
  height: 29.800px;
  padding: 0 7px;
  border: 1px solid #e7eaf0;
  font-weight: 400;
  white-space: nowrap;
}
.score th {
  padding-right: 10px;
  text-align: right;
  background-color: #f7f7f7;
}
.dlg-foot {
  flex: 1;
  display: flex;
  align-items: center;
  justify-content: center;
  padding-bottom: 2px;
  border-top: 1px solid #eee;
  margin-top: 14px;
}
.close-btn {
  width: 50px;
  height: 30px;
  margin-left: 0;
  padding: 0;
  background-color: #fff;
  border: 1px solid #ccc;
  border-radius: 3px;
  font-size: 13px;
  color: #333;
}
```
